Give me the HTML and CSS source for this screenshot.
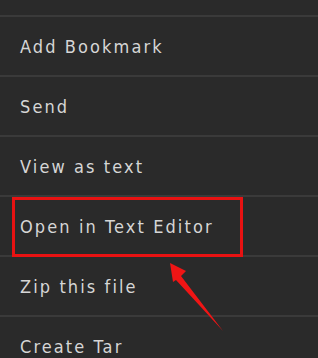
FILE: index.html
```html
<!DOCTYPE html>
<html>
<head>
<meta charset="utf-8">
<link rel="stylesheet" href="styles.css">
</head>
<body>
<div class="screen">
  <ul class="menu">
    <li class="item">Add Bookmark</li>
    <li class="item">Send</li>
    <li class="item">View as text</li>
    <li class="item">Open in Text Editor</li>
    <li class="item">Zip this file</li>
    <li class="item">Create Tar</li>
  </ul>
  <div class="highlight"></div>
  <svg class="arrow" width="318" height="358" viewBox="0 0 318 358">
    <polygon points="170,263 186,271 181,276 223,331 176,280 173,282" fill="#f01515"/>
  </svg>
</div>
</body>
</html>
```
FILE: styles.css
```css
html, body {
  margin: 0;
  padding: 0;
  background: #2a2a2a;
}
.screen {
  position: relative;
  width: 318px;
  height: 358px;
  overflow: hidden;
  background: #2a2a2a;
}
.menu {
  list-style: none;
  margin: 0;
  padding: 15px 0 0 0;
}
.item {
  height: 58px;
  border-top: 2px solid #3a3a3a;
  display: flex;
  align-items: center;
  padding-left: 20px;
  font-family: "DejaVu Sans", sans-serif;
  font-stretch: condensed;
  font-size: 18px;
  letter-spacing: 2.1px;
  color: #d6d6d6;
}
.highlight {
  position: absolute;
  left: 12px;
  top: 197px;
  width: 225px;
  height: 54px;
  border: 3px solid #e81212;
}
.arrow {
  position: absolute;
  left: 0;
  top: 0;
}
```
